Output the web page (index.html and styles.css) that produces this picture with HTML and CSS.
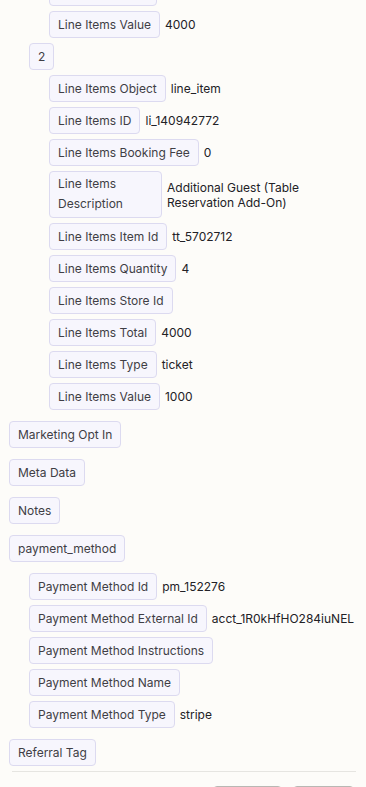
FILE: index.html
```html
<!DOCTYPE html>
<html lang="en">
<head>
    <meta charset="UTF-8">
    <meta name="viewport" content="width=device-width, initial-scale=1.0">
    <title>Order Data</title>
    <link rel="stylesheet" href="styles.css">
</head>
<body>
    <div class="panel">
        <ul class="tree">
            <li>
                <ul class="tree nested">
                    <li>
                        <ul class="tree nested">
                            <li class="row"><span class="key">Line Items Type</span><span class="value">ticket</span></li>
                            <li class="row"><span class="key">Line Items Value</span><span class="value">4000</span></li>
                        </ul>
                    </li>
                    <li>
                        <div class="row"><span class="key">2</span></div>
                        <ul class="tree nested">
                            <li class="row"><span class="key">Line Items Object</span><span class="value">line_item</span></li>
                            <li class="row"><span class="key">Line Items ID</span><span class="value">li_140942772</span></li>
                            <li class="row"><span class="key">Line Items Booking Fee</span><span class="value">0</span></li>
                            <li class="row"><span class="key wrap">Line Items Description</span><span class="value">Additional Guest (Table Reservation Add-On)</span></li>
                            <li class="row"><span class="key">Line Items Item Id</span><span class="value">tt_5702712</span></li>
                            <li class="row"><span class="key">Line Items Quantity</span><span class="value">4</span></li>
                            <li class="row"><span class="key">Line Items Store Id</span></li>
                            <li class="row"><span class="key">Line Items Total</span><span class="value">4000</span></li>
                            <li class="row"><span class="key">Line Items Type</span><span class="value">ticket</span></li>
                            <li class="row"><span class="key">Line Items Value</span><span class="value">1000</span></li>
                        </ul>
                    </li>
                </ul>
            </li>
            <li class="row"><span class="key">Marketing Opt In</span></li>
            <li class="row"><span class="key">Meta Data</span></li>
            <li class="row"><span class="key">Notes</span></li>
            <li>
                <div class="row"><span class="key">payment_method</span></div>
                <ul class="tree nested top-level">
                    <li class="row"><span class="key">Payment Method Id</span><span class="value">pm_152276</span></li>
                    <li class="row"><span class="key">Payment Method External Id</span><span class="value">acct_1R0kHfHO284iuNEL</span></li>
                    <li class="row"><span class="key">Payment Method Instructions</span></li>
                    <li class="row"><span class="key">Payment Method Name</span></li>
                    <li class="row"><span class="key">Payment Method Type</span><span class="value">stripe</span></li>
                </ul>
            </li>
            <li class="row"><span class="key">Referral Tag</span></li>
        </ul>

        <div class="footer">
            <button class="btn">Cancel</button>
            <button class="btn">Save</button>
        </div>
    </div>
</body>
</html>
```

FILE: styles.css
```css
* {
    margin: 0;
    padding: 0;
    box-sizing: border-box;
}

body {
    background-color: #fdfcf9;
    color: #3b3a40;
    font-family: Inter, 'Noto Sans', sans-serif;
    font-size: 12px;
}

.panel {
    margin-top: -21px;
    padding: 0 10px 0 9px;
}

.tree {
    list-style: none;
    display: flex;
    flex-direction: column;
    gap: 11px;
}

.tree.nested {
    gap: 5px;
    padding-left: 20px;
}

/* the nested list sits 5px below its parent chip */
.row + .tree.nested {
    margin-top: 5px;
}

/* children of a top-level object get the wider top-level spacing */
.row + .tree.top-level {
    margin-top: 11px;
}

.row {
    display: flex;
    align-items: center;
    gap: 5px;
}

.key {
    flex: none;
    background-color: #f7f6fd;
    border: 1px solid #dcdaf0;
    border-radius: 4px;
    padding: 2px 8px;
    line-height: 21px;
    color: #3f3e45;
}

.key.wrap {
    width: 113px;
    line-height: 20px;
    padding-bottom: 3px;
}

.value {
    line-height: 15px;
    color: #222126;
}

.footer {
    margin: 5px 0 0 3px;
    padding: 14px 2px 0 0;
    border-top: 1px solid #e6e5e1;
    display: flex;
    justify-content: flex-end;
    gap: 11px;
}

.btn {
    min-width: 61px;
    font-family: inherit;
    font-size: 12px;
    padding: 6px 14px;
    border: 1px solid #b9b8b4;
    border-radius: 4px;
    background-color: #f3f2ee;
    color: #333;
}
```
